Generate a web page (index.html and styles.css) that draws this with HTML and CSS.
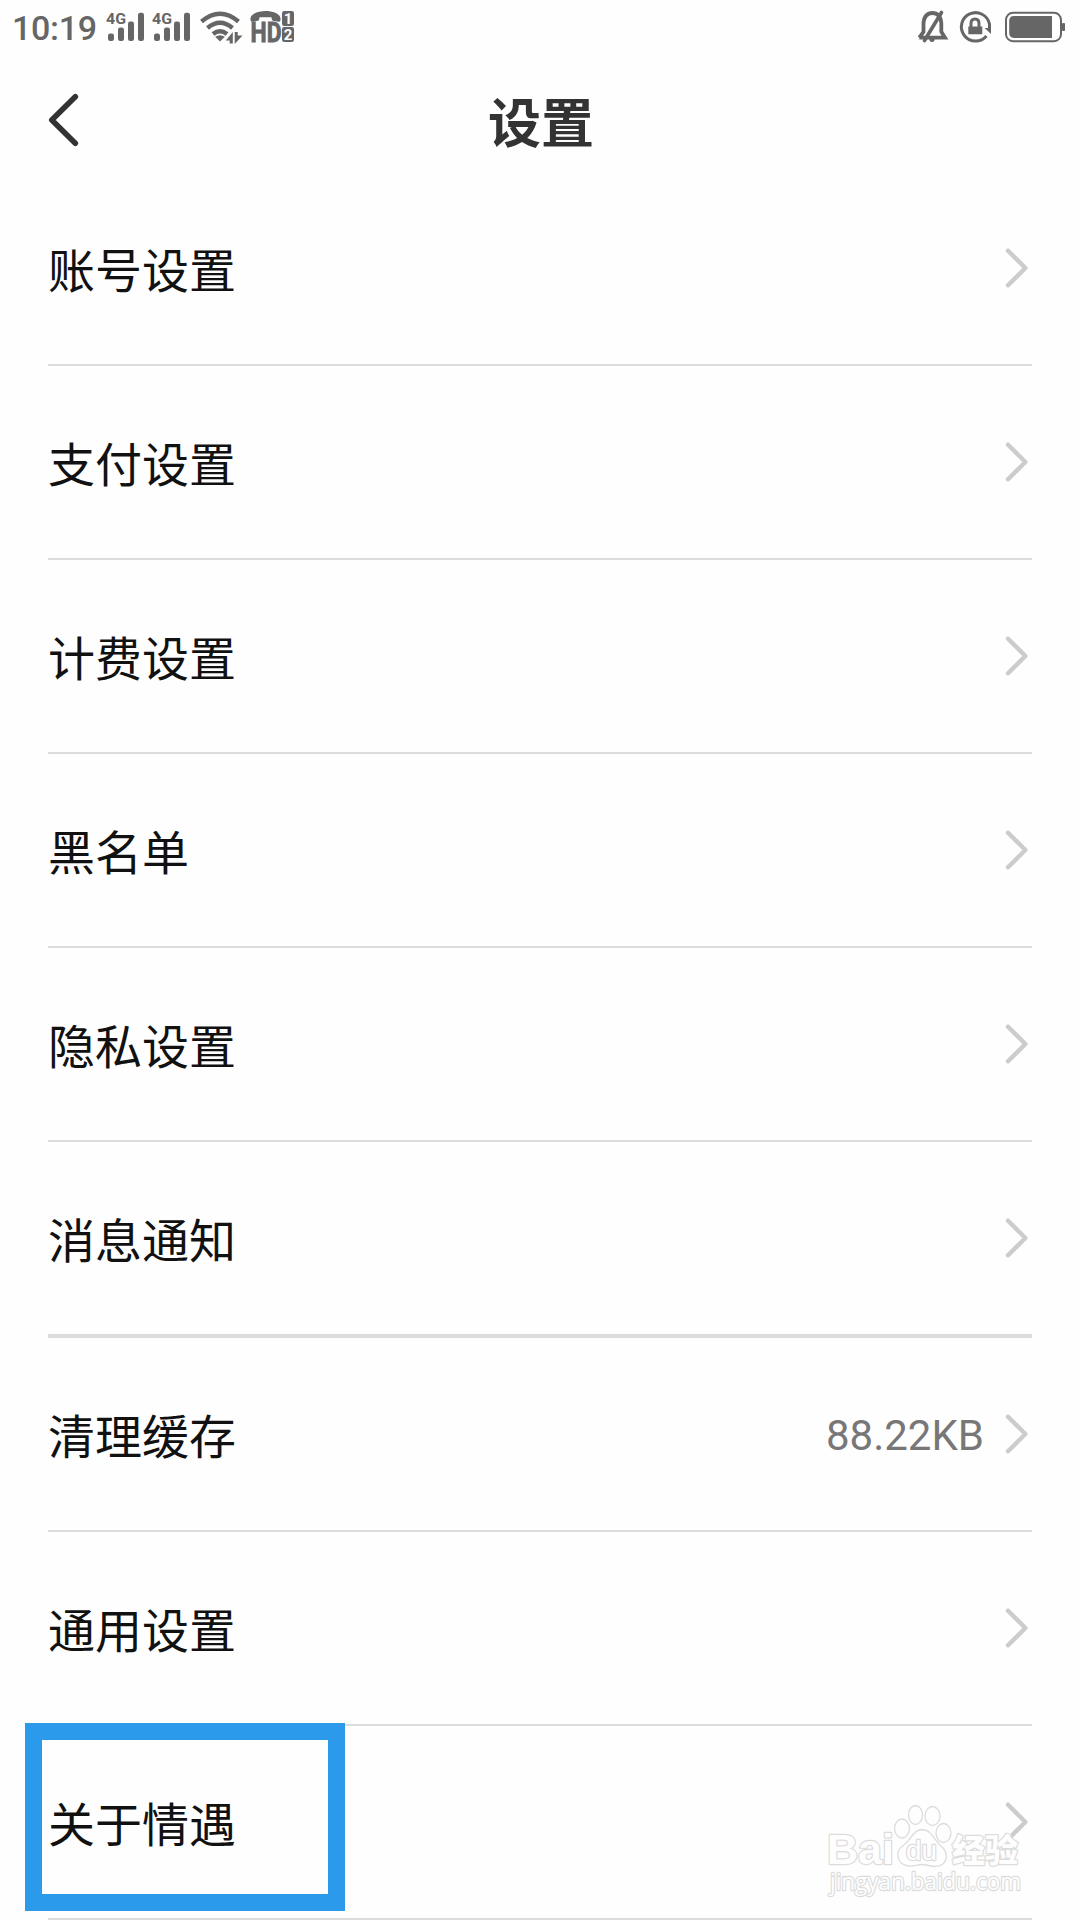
FILE: index.html
```html
<!DOCTYPE html>
<html lang="zh-CN">
<head>
<meta charset="utf-8">
<title>设置</title>
<link rel="stylesheet" href="styles.css">
</head>
<body>
<svg class="defs" width="0" height="0" aria-hidden="true">
  <symbol id="chevron" viewBox="0 0 28 44"><path d="M4 4.7L21.4 22L4 39.3" fill="none" stroke="#ccc" stroke-width="4.4" stroke-linecap="round" stroke-linejoin="round"/></symbol>
  <symbol id="bars" viewBox="0 0 40 32">
    <rect x="2" y="23.5" width="6" height="7.5" rx="2.2"/><rect x="12" y="17.5" width="6" height="13.5" rx="2.2"/><rect x="22" y="11.5" width="6" height="19.5" rx="2.2"/><rect x="32" y="2.7" width="6" height="28.3" rx="2.2"/>
  </symbol>
</svg>
<main class="screen">
  <header class="status">
    <span class="clock">10:19</span>
    <svg class="signal" width="40" height="32"><text x="0" y="13.5" class="net" textLength="20" lengthAdjust="spacingAndGlyphs">4G</text><use href="#bars"/></svg>
    <svg class="signal" width="40" height="32"><text x="0" y="13.5" class="net" textLength="20" lengthAdjust="spacingAndGlyphs">4G</text><use href="#bars"/></svg>
    <svg class="wifi" width="46" height="36" viewBox="0 0 46 36">
      <g fill="none" stroke="#666" stroke-width="4.4"><path d="M2.500 13.500Q21 -2 39.500 13.500"/><path d="M8.500 20Q21 9.500 33.500 20"/><path d="M14 26Q21 20.300 28 26"/></g>
      <path d="M16.200 28.800Q21 25.500 25.800 28.800L21 33.500Z"/>
      <path d="M33.800 24V35.500H30.700V32.500H26.800ZM35.700 24V36L43.500 27.600H38.700V24Z"/>
    </svg>
    <svg class="hd" width="46" height="36" viewBox="0 0 46 36">
      <path d="M0.500 12V10C2.500 0.800 28.500 0.800 30.500 10V12Q30.500 14 28.500 13.700L23 12.700Q21.500 12.200 21.500 9.200H9.500Q9.500 12.200 8 12.700L2.500 13.700Q0.500 14 0.500 12Z"/>
      <text x="0.500" y="34" class="hd-text" textLength="31" lengthAdjust="spacingAndGlyphs">HD</text>
      <rect x="32" y="3" width="12" height="15" rx="2.200"/><rect x="32" y="19" width="12" height="15" rx="2.200"/>
      <text x="38" y="16" class="sim">1</text><text x="38" y="32" class="sim">2</text>
    </svg>
    <svg class="bell" width="32" height="36" viewBox="0 0 32 36">
      <g fill="none" stroke="#666" stroke-width="3.800"><path d="M2.300 29.700H28L24.300 23.800V15Q23.300 5 15.500 5Q7.500 5 6.500 15V23.800L2.300 29.700"/><path d="M7.500 32.500L24.500 4.500" stroke-width="3.600" stroke-linecap="round"/></g>
      <path d="M12.300 31H17.700Q17.700 34 15 34Q12.300 34 12.300 31Z"/>
    </svg>
    <svg class="lock" width="34" height="36" viewBox="0 0 34 36">
      <g fill="none" stroke="#666" stroke-width="3"><path d="M30.500 22V16A14.200 14.200 0 1 0 27.500 28"/><path d="M12 20V15.500Q12 11 16 11Q20 11 20 15.500V20"/></g>
      <path d="M9.300 18.500H23.300V26.300H9.300ZM25.700 20H32V26Z"/>
    </svg>
    <svg class="battery" width="62" height="36" viewBox="0 0 62 36">
      <rect x="2" y="4.800" width="55" height="28.400" rx="7" fill="none" stroke="#666" stroke-width="2"/>
      <path d="M10 7.900H48V29.900H10Q5.200 29.900 5.200 25.100V12.700Q5.200 7.900 10 7.900Z"/><rect x="58" y="15" width="3" height="8" rx="1"/>
    </svg>
  </header>
  <nav class="titlebar">
    <svg class="back" width="36" height="56" viewBox="0 0 36 56"><path d="M27.300 4.800L3.800 28L27.300 51.200" fill="none" stroke="#333" stroke-width="5.600" stroke-linecap="round" stroke-linejoin="round"/></svg>
    <h1>设置</h1>
  </nav>
  <ul class="list">
    <li><span>账号设置</span><svg class="chevron"><use href="#chevron"/></svg></li>
    <li><span>支付设置</span><svg class="chevron"><use href="#chevron"/></svg></li>
    <li><span>计费设置</span><svg class="chevron"><use href="#chevron"/></svg></li>
    <li><span>黑名单</span><svg class="chevron"><use href="#chevron"/></svg></li>
    <li><span>隐私设置</span><svg class="chevron"><use href="#chevron"/></svg></li>
    <li class="group-end"><span>消息通知</span><svg class="chevron"><use href="#chevron"/></svg></li>
    <li><span>清理缓存</span><em>88.22KB</em><svg class="chevron"><use href="#chevron"/></svg></li>
    <li><span>通用设置</span><svg class="chevron"><use href="#chevron"/></svg></li>
    <li><span>关于情遇</span><svg class="chevron"><use href="#chevron"/></svg></li>
  </ul>
  <div class="highlight"></div>
  <svg class="watermark" width="210" height="110" viewBox="0 0 210 110">
    <g class="outline">
      <text x="3" y="68" class="bai" textLength="67" lengthAdjust="spacingAndGlyphs">Bai</text>
      <ellipse cx="78" cy="32.500" rx="7.500" ry="9.500"/><ellipse cx="91.500" cy="19" rx="7" ry="9.500"/><ellipse cx="108.500" cy="20" rx="7.500" ry="9.500"/><ellipse cx="119.500" cy="37" rx="7.500" ry="9.500"/>
      <path d="M98 33.500C89 34 88 43 80 49C70 55 73 69 85 70C90 70.500 93 68.500 98 68.500S106 70.500 111 70.500C123 70 126 58 117 50C109 43 108 34 98 33.500Z"/>
      <text x="82" y="63.500" class="du" textLength="31" lengthAdjust="spacingAndGlyphs">du</text>
      <text x="128" y="65.500" class="jingyan" textLength="66" lengthAdjust="spacingAndGlyphs">经验</text>
      <text x="6" y="94" class="url" textLength="191" lengthAdjust="spacingAndGlyphs">jingyan.baidu.com</text>
    </g>
  </svg>
</main>
</body>
</html>
```
FILE: styles.css
```css
* { box-sizing: border-box; }
html { overflow: hidden; }
body { margin: 0; background: #fefefe; overflow: hidden; }
.defs { position: absolute; }
.screen {
  position: relative;
  width: 1080px;
  height: 1920px;
  overflow: hidden;
  font-family: Roboto, "Noto Sans CJK SC", sans-serif;
}
.status { display: flex; height: 56px; padding-left: 12px; fill: #666; color: #666; }
.status svg { flex: none; margin-top: 8px; overflow: visible; }
.clock { width: 94px; font-size: 34px; font-weight: 500; line-height: 57px; letter-spacing: -0.3px; }
.status .signal { width: 40px; height: 32px; margin-top: 10px; margin-right: 6px; }
.net { font: bold 14.5px Roboto, sans-serif; }
.status .wifi { margin-left: 1px; }
.status .hd { margin-left: 5px; }
.hd-text { font: bold 27px Roboto, sans-serif; stroke: #666; stroke-width: 0.8px; }
.sim { font: bold 15px Roboto, sans-serif; fill: #fff; text-anchor: middle; }
.status .bell { margin-left: auto; margin-right: 10px; }
.status .lock { margin-right: 11px; }
.status .battery { margin-right: 14px; }

.titlebar { display: grid; grid-template-columns: 36px 1fr 36px; align-items: start; height: 116px; padding: 0 48px; }
.back { margin-top: 36px; }
h1 { margin: 31px 0 0; padding-left: 2px; text-align: center; font-size: 53px; font-weight: 700; line-height: 76px; color: #333; }

.list { margin: 0; padding: 0 48px; list-style: none; }
.list li {
  display: flex;
  align-items: center;
  height: 194px;
  border-bottom: 2px solid #dcdcdc;
  color: #111;
  font-size: 47px;
  line-height: 70px;
}
.list .group-end { height: 196px; border-bottom-width: 4px; }
.list span { flex: 1; padding-top: 7px; }
.list em { margin-right: 20px; padding-top: 4px; font-style: normal; font-size: 42px; color: #777; }
.chevron { width: 28px; height: 44px; }

.highlight { position: absolute; left: 25px; top: 1723px; width: 320px; height: 188px; border: 17.5px solid #2b9aeb; }
.watermark { position: absolute; left: 824px; top: 1796px; }
.outline { fill: #fefefe; stroke: #dcdcdc; stroke-width: 1.3px; }
.outline text { paint-order: stroke; stroke-width: 2.4px; stroke-linejoin: round; }
.bai { font: bold 42px "Liberation Sans", sans-serif; }
.du { font: 27px "Liberation Sans", sans-serif; }
.jingyan { font: 900 32px "Noto Sans CJK SC", sans-serif; }
.url { font: 23px "Open Sans", sans-serif; }
```
